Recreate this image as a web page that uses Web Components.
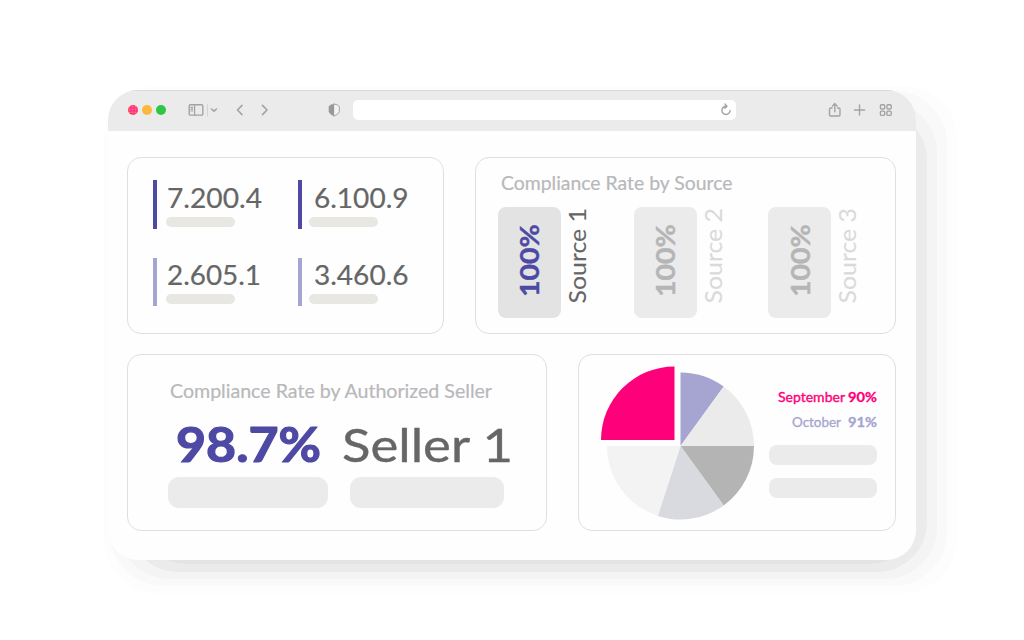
<!DOCTYPE html>
<html lang="en">
<head>
<meta charset="utf-8">
<title>Compliance dashboard</title>
<style>
html,body{margin:0;height:100%;background:#fff;overflow:hidden}
body{font-family:Lato,"Noto Sans",sans-serif}
</style>
</head>
<body>
<compliance-app></compliance-app>
<script>
function define(name, html, after) {
  const t = document.createElement('template');
  t.innerHTML = html;
  customElements.define(name, class extends HTMLElement {
    connectedCallback() {
      if (this.shadowRoot) return;
      this.attachShadow({ mode: 'open' }).appendChild(t.content.cloneNode(true));
      if (after) after.call(this, this.shadowRoot);
    }
  });
}

/* One line of text fitted to a fixed width; its box runs from cap height to baseline. */
define('text-run', `<style>
:host{display:block;flex:none}
svg{display:block;overflow:visible}
text{fill:currentColor;stroke:currentColor;stroke-linejoin:round;font-family:Lato,"Noto Sans",sans-serif;white-space:pre}
</style><svg><text lengthAdjust="spacingAndGlyphs"></text></svg>`, function (root) {
  const w = +this.getAttribute('w'), cap = +this.getAttribute('cap'), up = this.hasAttribute('vertical');
  const svg = root.querySelector('svg'), t = root.querySelector('text');
  svg.setAttribute('width', up ? cap : w);
  svg.setAttribute('height', up ? w : cap);
  t.textContent = this.getAttribute('label');
  t.setAttribute('textLength', w);
  t.setAttribute('font-size', cap / 0.72);
  t.setAttribute('font-weight', this.getAttribute('weight') || 400);
  t.setAttribute('stroke-width', this.getAttribute('heft') || 0);
  t.setAttribute('transform', up ? `translate(${cap} ${w}) rotate(-90)` : `translate(0 ${cap})`);
});

define('skeleton-pill', `<style>
:host{display:block;flex:none;background:var(--c,#ebebeb);width:var(--w);height:var(--h);border-radius:var(--r)}
</style>`);

define('panel-card', `<style>
:host{display:block;box-sizing:border-box;height:177.4px;border:1px solid #dfdfdf;border-radius:14px;background:#fefefe}
</style><slot></slot>`);

/* Stepped shadow that lies behind the window, one rounded plate per tone. */
define('window-shadow', `<style>
:host{position:absolute;inset:0;z-index:-1}
svg{display:block;overflow:visible}
</style><svg width="808" height="470" viewBox="108 90 808 470">
<rect x="104" y="86" width="853" height="507" rx="54" fill="#fdfdfd"/>
<rect x="110" y="90.5" width="837" height="495.5" rx="54" fill="#f9f9f9"/>
<rect x="118" y="101" width="819" height="478" rx="52" fill="#f4f4f4"/>
<rect x="128" y="110" width="799" height="462" rx="50" fill="#ebebeb"/>
<rect x="142" y="125" width="772" height="439" rx="44" fill="#e4e4e4"/></svg>`);

define('browser-bar', `<style>
:host{display:flex;box-sizing:border-box;height:41px;align-items:center;background:#ebebeb;padding:0 25px 2px 19.5px;border-top:1px solid #d9d9d9}
svg{display:block;flex:none;fill:none;stroke:#a3a3a3;stroke-width:1.4;stroke-linecap:round;stroke-linejoin:round}
.dot{width:10px;height:10px;border-radius:50%;margin-right:4.1px;flex:none}
.address{box-sizing:border-box;display:flex;align-items:center;justify-content:flex-end;width:383px;height:20px;padding-right:4px;border-radius:5px;background:#fff;margin-left:12px;flex:none}
</style>
<span class="dot" style="background:radial-gradient(circle,#ff7a4e 0 .7px,transparent 1.2px) 0 0/3px 3px,#ff2f8c"></span>
<span class="dot" style="background:#fbb83d"></span>
<span class="dot" style="background:#2fc545"></span>
<svg style="margin-left:18px" width="30" height="14" viewBox="0 0 30 14"><rect x="1.2" y="1.7" width="13.6" height="10.4" rx="1.2"/><path d="M6.6 2v10M3 4.3h1.8M3 6.2h1.8M3 8h1.8" stroke-width="1.2"/><path d="M19.5 1v12" stroke="#d4d4d4" stroke-width="1"/><path d="M23.5 6 26 8.2 28.5 6" stroke-width="1.6"/></svg>
<svg style="margin-left:17px" width="10" height="14" viewBox="0 0 10 14"><path d="M7 2.4 2.5 7 7 11.6" stroke-width="1.6"/></svg>
<svg style="margin-left:16px" width="8" height="14" viewBox="0 0 8 14"><path d="M1.5 2.4 6 7l-4.5 4.6" stroke-width="1.6"/></svg>
<svg style="margin-left:58.5px" width="14" height="14" viewBox="0 0 14 14"><path d="M7.2 1Q3 1.7 2 3.6v5.2Q3 11.5 7.2 13z" fill="#999" stroke="#999" stroke-width=".6"/><path d="M7.2 1q4 .7 5.1 2.6v5.2Q11.300 11.5 7.200 13" fill="#f3f3f3" stroke-width="1"/></svg>
<div class="address"><svg width="12" height="14" viewBox="0 0 12 14" stroke-width="1.3"><path d="M6.200 3.300A4.100 4.100 0 1 0 10.100 7.400M4.900.9 7 3.200 4.900 5.300"/></svg></div>
<svg style="margin-left:91px" width="16" height="16" viewBox="0 0 16 16"><path d="M5 6H3.800Q2.500 6 2.500 7.300v5.400Q2.500 14 3.800 14h7.900q1.300 0 1.300-1.300V7.300Q13 6 11.700 6h-1.200M7.800 9.700V1.800M5.500 3.900l2.300-2.300 2.300 2.300"/></svg>
<svg style="margin-left:9px" width="16" height="16" viewBox="0 0 16 16"><path d="M2.500 8h10M7.500 3v10"/></svg>
<svg style="margin-left:9.300px" width="16" height="16" viewBox="0 0 16 16"><rect x="2.400" y="2.700" width="4.300" height="4.300" rx="1.200"/><rect x="8.900" y="2.700" width="4.300" height="4.300" rx="1.200"/><rect x="2.400" y="9.100" width="4.300" height="4.300" rx="1.200"/><rect x="8.900" y="9.100" width="4.300" height="4.300" rx="1.200"/></svg>`);

define('metric-stat', `<style>
:host{display:block;box-sizing:border-box;height:48.5px;border-left:4.5px solid var(--bar);color:#666;padding:8.3px 0 0 9px;--w:69px;--h:10.3px;--r:5px;--c:#e8e7e2}
.value{margin:0 0 9px var(--indent,1px)}
</style><div class="value"></div><skeleton-pill></skeleton-pill>`, function (root) {
  const run = document.createElement('text-run');
  run.setAttribute('cap', '19'); run.setAttribute('heft', '.2');
  run.setAttribute('w', this.getAttribute('w')); run.setAttribute('label', this.getAttribute('value'));
  root.querySelector('.value').append(run);
});

define('source-rate', `<style>
:host{display:flex}
.tile{box-sizing:border-box;width:63px;height:110.6px;border-radius:8px;background:var(--tile,#ebebeb);padding:17px 0 0 21.8px;color:var(--rate,#b5b5b5)}
.name{padding:1px 0 0 8.5px;color:var(--name,#dadadc)}
</style><div class="tile"><text-run vertical label="100%" w="73" cap="19.5" weight="700" heft=".4"></text-run></div><div class="name"></div>`, function (root) {
  const run = document.createElement('text-run');
  const a = { vertical: '', label: this.getAttribute('name'), w: 95.5, cap: 17.2, heft: '.1' };
  for (const k in a) run.setAttribute(k, a[k]);
  root.querySelector('.name').append(run);
});

define('month-pie', `<style>:host{display:block;flex:none}svg{display:block}</style><svg width="154" height="154" viewBox="600 366 154 154"></svg>`, function (root) {
  const slice = (cx, cy, a, b, c) => {
    const p = d => `${cx + 73.5 * Math.sin(d * Math.PI / 180)} ${cy - 73.5 * Math.cos(d * Math.PI / 180)}`;
    return `<path fill="${c}" d="M${cx} ${cy}L${p(a)}A73.5 73.5 0 0 1 ${p(b)}Z"/>`;
  };
  root.querySelector('svg').innerHTML =
    slice(680.5, 446, 0, 36, '#a6a4d1') + slice(680.5, 446, 36, 90, '#ebebeb') +
    slice(680.5, 446, 90, 144, '#b4b4b4') + slice(680.5, 446, 144, 198, '#d9dadf') +
    slice(680.5, 446, 198, 270, '#f3f3f3') + slice(674.5, 440, 270, 360, '#ff007b');
});

define('month-row', `<style>:host{display:flex;justify-content:flex-end}</style><slot></slot>`);

define('compliance-app', `<style>
:host{display:flow-root;width:1024px;height:640px}
.window{position:relative;z-index:0;width:808px;height:470px;margin:90px 0 0 108px}
.face{height:470px;border-radius:30px;background:#fefefe;overflow:hidden}
.row{display:flex;justify-content:space-between;padding:25.5px 20.4px 0 18.6px}
.row+.row{padding-top:20px}
.stats{width:317.6px;display:grid;grid-template-columns:145px 1fr;grid-template-rows:48.5px 48.5px;row-gap:29px;padding:22.8px 0 0 25.3px}
.sources{width:420.6px;padding:19.6px 0 0 21.5px;color:#b8b8bb}
.sources>text-run{margin-left:3px}
.tiles{display:flex;margin-top:16.7px}
.tiles source-rate{width:136px;flex:none}
.tiles source-rate+source-rate+source-rate{margin-left:-1.6px}
.seller{width:420.600px;padding:30.200px 0 0 40px;color:#b8b8bb}
.seller>text-run{margin-left:2.700px}
.figures{display:flex;margin:29.300px 0 15.600px 8.500px}
.pills{display:flex;gap:21.500px;--h:31px;--r:11px}
.months{width:317.600px;display:flex;padding:11px 0 0 21px}
.legend{width:108px;margin-left:15.400px;padding-top:27.300px;--w:108px;--h:20px;--r:8px}
.legend month-row+month-row{margin:15.700px 0 17.300px}
.legend skeleton-pill+skeleton-pill{margin-top:13px}
</style>
<div class="window">
<window-shadow></window-shadow>
<div class="face">
<browser-bar></browser-bar>
<div class="row">
 <panel-card class="stats">
  <metric-stat value="7.200.4" w="95" style="--bar:#4d49a4"></metric-stat>
  <metric-stat value="6.100.9" w="94.5" style="--bar:#4d49a4;--indent:4.5px;padding-left:7.300px"></metric-stat>
  <metric-stat value="2.605.1" w="94" style="--bar:#a6a4d1"></metric-stat>
  <metric-stat value="3.460.6" w="94.5" style="--bar:#a6a4d1;--indent:4.5px;padding-left:7.300px"></metric-stat>
 </panel-card>
 <panel-card class="sources">
  <text-run label="Compliance Rate by Source" w="231.5" cap="13.2" heft=".2"></text-run>
  <div class="tiles">
   <source-rate name="Source 1" style="--tile:#e3e3e3;--rate:#4d49a4;--name:#666"></source-rate>
   <source-rate name="Source 2"></source-rate>
   <source-rate name="Source 3"></source-rate>
  </div>
 </panel-card>
</div>
<div class="row">
 <panel-card class="seller">
  <text-run label="Compliance Rate by Authorized Seller" w="322" cap="13.2" heft=".2"></text-run>
  <div class="figures">
   <text-run label="98.7%" w="145" cap="34" weight="700" heft="1.2" style="color:#4d49a4"></text-run>
   <text-run label="Seller 1" w="171" cap="34" heft=".4" style="color:#666;margin-left:20.500px"></text-run>
  </div>
  <div class="pills"><skeleton-pill style="--w:160.500px"></skeleton-pill><skeleton-pill style="--w:154px"></skeleton-pill></div>
 </panel-card>
 <panel-card class="months">
  <month-pie></month-pie>
  <div class="legend">
   <month-row style="color:#ff007b"><text-run label="September" w="67" cap="9.3" heft=".35"></text-run><text-run label="90%" w="29" cap="9.3" weight="700" heft=".3" style="margin-left:3.300px"></text-run></month-row>
   <month-row style="color:#a6a4d1"><text-run label="October" w="49" cap="9.3" heft=".3"></text-run><text-run label="91%" w="29" cap="9.3" weight="700" heft=".3" style="margin-left:7px"></text-run></month-row>
   <skeleton-pill></skeleton-pill><skeleton-pill></skeleton-pill>
  </div>
 </panel-card>
</div>
</div>
</div>`);
</script>
</body>
</html>
